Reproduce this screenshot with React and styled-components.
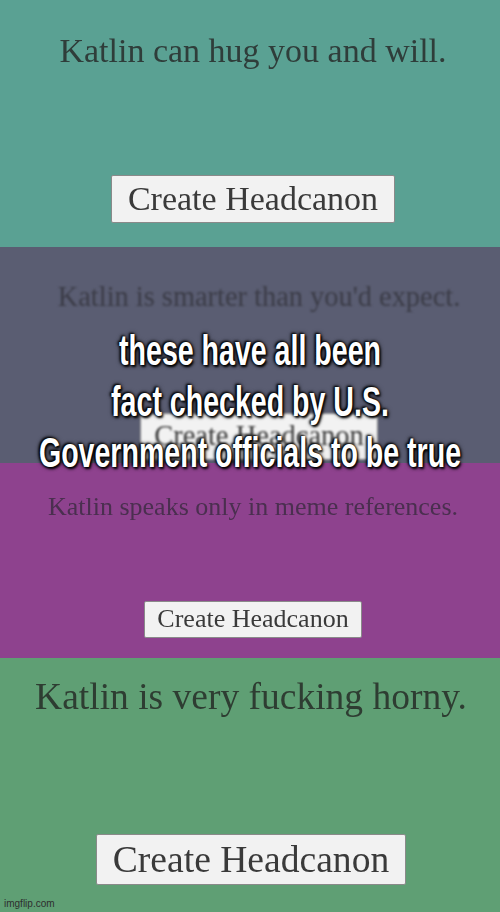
import React from 'react';
import styled, { createGlobalStyle } from 'styled-components';

const Global = createGlobalStyle`
  html, body { margin: 0; padding: 0; }
  body { width: 500px; height: 912px; overflow: hidden; }
`;

const Page = styled.div`
  position: relative;
  width: 500px;
  height: 912px;
  overflow: hidden;
  display: flex;
  flex-direction: column;
  font-family: "Liberation Serif", "Times New Roman", serif;
`;

const Panel = styled.section`
  height: ${p => p.h}px;
  background: ${p => p.bg};
  display: flex;
  flex-direction: column;
  align-items: center;
  box-sizing: border-box;
  padding-top: ${p => p.top}px;
  padding-left: ${p => p.shift * 2}px;

  & > * {
    filter: ${p => (p.soft ? 'blur(1.1px)' : 'blur(0.4px)')};
  }
`;

const Line = styled.p`
  margin: 0;
  font-size: ${p => p.size}px;
  line-height: 1;
  color: ${p => p.color};
  white-space: nowrap;
`;

const Button = styled.button`
  margin-top: ${p => p.gap}px;
  font-family: inherit;
  font-size: ${p => p.size}px;
  line-height: 1;
  color: #3a3a3a;
  background: #f2f2f2;
  border: 1px solid #8a8a8a;
  border-radius: 2px;
  padding: ${p => p.pad};
  white-space: nowrap;
`;

// white caption with a dark glow, squeezed into a narrow face
const Caption = styled.div`
  position: absolute;
  left: 50%;
  top: 325px;
  width: 700px;
  display: flex;
  flex-direction: column;
  align-items: center;
  font-family: "Liberation Sans", Arial, sans-serif;
  font-weight: 700;
  font-size: 42px;
  line-height: 51px;
  color: #fff;
  white-space: nowrap;
  transform: translateX(-50%) scaleX(0.68);
  transform-origin: 50% 0;
  text-shadow: 0 0 3px #000, 2px 2px 3px #000, -2px -1px 3px #000, 0 0 7px rgba(0, 0, 0, 0.7);
`;

const Mark = styled.div`
  position: absolute;
  left: 4px;
  bottom: 3px;
  font-family: "Liberation Sans", Arial, sans-serif;
  font-size: 10px;
  color: #2e2e2e;
`;

const panels = [
  { bg: '#5aa193', h: 247, top: 34, shift: 3, text: 'Katlin can hug you and will.', size: 34, color: '#2f3d3a', btn: 34, gap: 107, pad: '6px 16px' },
  { bg: '#5a5d72', h: 216, top: 36, shift: 9, text: "Katlin is smarter than you'd expect.", size: 28.4, color: '#3b3c47', btn: 28.5, gap: 102, pad: '8px 13px', soft: true },
  { bg: '#8e428e', h: 195, top: 31, shift: 3, text: 'Katlin speaks only in meme references.', size: 26, color: '#4a2f4f', btn: 26, gap: 81, pad: '4px 12px 5px' },
  { bg: '#5f9f74', h: 254, top: 20, shift: 1, text: 'Katlin is very fucking horny.', size: 37.5, color: '#2e3d32', btn: 37.6, gap: 118, pad: '6px 16px' },
];

const caption = ['these have all been', 'fact checked by U.S.', 'Government officials to be true'];

export default function App() {
  return (
    <Page>
      <Global />
      {panels.map(p => (
        <Panel key={p.text} bg={p.bg} h={p.h} top={p.top} shift={p.shift} soft={p.soft}>
          <Line size={p.size} color={p.color}>{p.text}</Line>
          <Button size={p.btn} gap={p.gap} pad={p.pad}>Create Headcanon</Button>
        </Panel>
      ))}
      <Caption>
        {caption.map(t => <span key={t}>{t}</span>)}
      </Caption>
      <Mark>imgflip.com</Mark>
    </Page>
  );
}
